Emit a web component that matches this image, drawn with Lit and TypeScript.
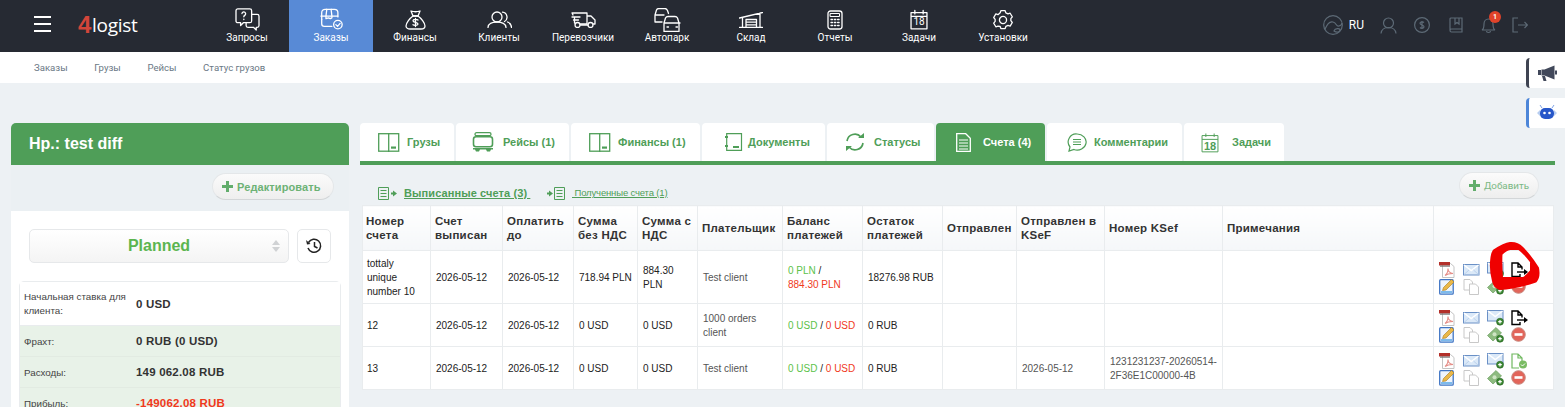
import { LitElement, html, css, svg } from "lit";
import { customElement } from "lit/decorators.js";

const navIcon: Record<string, any> = {
  q: svg`<path d="M3 2h13a2 2 0 0 1 2 2v11a2 2 0 0 1-2 2H9l-3 3v-3H3a2 2 0 0 1-2-2V4a2 2 0 0 1 2-2z"/><path d="M18 8h6a2 2 0 0 1 2 2v10a2 2 0 0 1-2 2h-1v3l-3-3h-6a2 2 0 0 1-2-2v-3"/><path d="M7.500 7a2 2 0 1 1 3 2c-.7.400-1 .9-1 1.600M9.500 13v.6"/>`,
  o: svg`<path d="M3 14V6a4 4 0 0 1 4-4h11a4 4 0 0 1 4 4v5"/><path d="M2 10h20M9 2l-1 8v3l3-1 2 1 2-1 0-2-1-8"/><path d="M3 14v5a3 3 0 0 0 3 3h9"/><circle cx="22" cy="20" r="5"/><path d="M19.600 20l2 2 3-3.500"/>`,
  f: svg`<path d="M6 1c3 1 6 1 9 0l-2 5H8z"/><path d="M8 6h5c3 2 7 7 7 10 0 2-2 3-4 3H5c-2 0-4-1-4-3 0-3 4-8 7-10z"/><path d="M13 10c-1-1-5-1-5 .7 0 2.300 5 1 5 3.300 0 1.600-4 1.600-5 .7M10.500 8.500v8"/>`,
  c: svg`<circle cx="10" cy="6" r="5"/><path d="M1 16.500c0-3.500 4-5.500 9-5.500s9 2 9 5.500"/><path d="M15.500 1.200a5 5 0 0 1 2 9.300M20.500 11c2.500 1 4 3 4 5.500"/>`,
  t: svg`<path d="M1 1h15v11H9.500M1 1l1 2M16 4h4l4 4v4h-1.500M1 5h8M2.500 8h5M3.500 5v6"/><circle cx="6.500" cy="13" r="2.500"/><circle cx="19.500" cy="13" r="2.500"/><path d="M9.500 13H17"/>`,
  a: svg`<path d="M1 14V7l1.500-5C3 1 4 .5 5 .5h6c1.500 0 2 1 2.500 2l1 3M1 7h9M1 14h7"/><path d="M10 23.500V15l1.500-5c.5-1 1-1.500 2.500-1.500h7c1.500 0 2 .5 2.500 1.500l1.500 5v8.500zM10 15h16M13 19h1.500M22 19h1.500"/>`,
  s: svg`<path d="M.5 6l23-5.500M3.500 15.500V6M21 15.500V1M.5 15.500h23M7 7.500h10.500v8H7zM7 10.200h10.500M7 12.800h10.500"/>`,
  r: svg`<rect x="1" y="1" width="14" height="18" rx="2.500"/><path d="M3.500 3.500h9v3h-9z" stroke-width="1"/><path d="M4 9.500h1.500M7.300 9.500h1.500M10.600 9.500h1.500M4 12.500h1.500M7.300 12.500h1.500M10.600 12.500h1.500M4 15.500h1.500M7.300 15.500h1.500M10.600 15.500h1.500"/>`,
  u: svg`<path d="M11 2h6l1 3 3 1.500 3-1 3 5-2 2.500v3l2 2.500-3 5-3-1-3 1.500-1 3h-6l-1-3L7 23.500l-3 1-3-5 2-2.500v-3L1 11.500l3-5 3 1L10 5z"/><circle cx="14" cy="15" r="5"/>`,
};

const navItems = [
  { l: "Запросы", i: "q", vb: "0 1 27 25", w: 25, h: 23 },
  { l: "Заказы", i: "o", vb: "1 1 27 26", w: 23, h: 23, on: true },
  { l: "Финансы", i: "f", vb: "0 0 21 20", w: 21, h: 20 },
  { l: "Клиенты", i: "c", vb: "0 0 25 17", w: 25, h: 17 },
  { l: "Перевозчики", i: "t", vb: "0 0 25 16", w: 25, h: 16 },
  { l: "Автопарк", i: "a", vb: "0 0 27 24", w: 27, h: 24 },
  { l: "Склад", i: "s", vb: "0 0 24 16", w: 24, h: 16 },
  { l: "Отчеты", i: "r", vb: "0 0 16 20", w: 16, h: 20 },
  { l: "Задачи", i: "z", vb: "", w: 18, h: 21 },
  { l: "Установки", i: "u", vb: "0 1 28 28", w: 20, h: 20 },
];

const pdfIcon = svg`<svg width="17" height="16" viewBox="0 0 17 16"><path d="M3.500 1.500h8l3.500 3v11H3.500z" fill="#fff" stroke="#c4c4c4"/><rect x="0" y="0" width="11" height="3.500" fill="#b3302a"/><rect x="1" y="3.500" width="10" height="1.200" fill="#777"/><path d="M6 13.500c2-1.500 3-4 3-7 0 3 2 4.500 5 5-3 0-6 .5-8 2z" fill="none" stroke="#e58e88" stroke-width="1.100"/></svg>`;
const mailIcon = svg`<svg width="17" height="12" viewBox="0 0 17 12"><rect x=".5" y=".5" width="15.500" height="10.500" fill="#dbe9f8" stroke="#6a90c6"/><path d="M1 1l7.250 5.500L15.500 1" fill="none" stroke="#fff" stroke-width="1.500"/><path d="M1 10.500L6 6M15.500 10.500L10.500 6" stroke="#bcd2ec" fill="none"/></svg>`;
const plusBadge = svg`<circle cx="13" cy="11.700" r="3.500" fill="#3f8a35" stroke="#1f5c1b" stroke-width=".6"/><path d="M11.200 11.700h3.600M13 9.900v3.600" stroke="#fff" stroke-width="1.200"/>`;
const mailPlus = svg`<svg width="17" height="16" viewBox="0 0 17 16"><rect x=".5" y=".5" width="15.500" height="10.500" fill="#dbe9f8" stroke="#6a90c6"/><path d="M1 1l7.250 5.500L15.500 1" fill="none" stroke="#fff" stroke-width="1.500"/>${plusBadge}</svg>`;
const editIcon = svg`<svg width="16" height="17" viewBox="0 0 16 17"><rect x=".7" y="1.700" width="13.500" height="14.500" rx="1" fill="#eef4fc" stroke="#3f74c4" stroke-width="1.300"/><rect x="2" y="13" width="11" height="2.300" fill="#7dbaec"/><path d="M3.500 12.500l1-3L12.500 1.500l2.500 2.500-8 8z" fill="#eab848" stroke="#a77a1f" stroke-width=".6"/></svg>`;
const copyIcon = svg`<svg width="17" height="16" viewBox="0 0 17 16"><path d="M1 .5h6l2.500 2.500v8H1z" fill="#fff" stroke="#c8c8c8"/><path d="M6.500 5h6l3 3v7.500h-9z" fill="#fff" stroke="#c8c8c8"/></svg>`;
const moneyIcon = svg`<svg width="17" height="16" viewBox="0 0 17 16"><path d="M.5 8.500L9 .5l5.500 5.500-8.500 8z" fill="#8dbb7f" stroke="#6a9e5e" stroke-width=".7"/><circle cx="7.500" cy="7.300" r="2" fill="#cfe5c4"/>${plusBadge}</svg>`;
const delIcon = svg`<svg width="15" height="15" viewBox="0 0 15 15"><circle cx="7.500" cy="7.500" r="6.800" fill="#e2655a" stroke="#c9897f"/><rect x="3.500" y="6.200" width="8" height="2.600" fill="#fff"/></svg>`;
const exportIcon = svg`<svg width="17" height="16" viewBox="0 0 17 16"><path d="M9 12v2.500H1V1h6l4 4v2.500M7 1v4h4" fill="none" stroke="#000" stroke-width="1.400"/><path d="M6 10h8" stroke="#000" stroke-width="1.400"/><path d="M13 7l4 3-4 3z" fill="#000"/></svg>`;
const okIcon = svg`<svg width="17" height="16" viewBox="0 0 17 16"><path d="M8 15H1V1h6l4 4v4M7 1v4h4" fill="none" stroke="#6fb85f" stroke-width="1.200"/><circle cx="12" cy="11.500" r="4" fill="#79bb62"/><path d="M10 11.500l1.500 1.500 2.500-2.500" stroke="#fff" fill="none"/></svg>`;

const G = "#4f9e58";
const tabIcons: Record<string, any> = {
  split: svg`<svg width="22" height="19" viewBox="0 0 22 19"><rect x=".7" y=".7" width="20" height="17.500" fill="none" stroke="${G}" stroke-width="1.300"/><path d="M10.700 0v19" stroke="${G}" stroke-width="1.300"/><rect x="13" y="13.500" width="5" height="2.200" fill="${G}"/></svg>`,
  bus: svg`<svg width="22" height="20" viewBox="0 0 22 20"><rect x="3" y=".7" width="16" height="3" rx="1.500" fill="none" stroke="${G}" stroke-width="1.300"/><rect x="1.500" y="4.700" width="19" height="10" rx="2.500" fill="none" stroke="${G}" stroke-width="1.600"/><path d="M1 16h20v1.500H1zM3 17.500h5l-1 2H4zM14 17.500h5l-1 2h-3z" fill="${G}"/></svg>`,
  doc: svg`<svg width="18" height="18" viewBox="0 0 18 18"><path d="M1.700.7h14.800v16.600H1.700z" fill="none" stroke="${G}" stroke-width="1.200"/><path d="M0 3h3v2H0zM0 12h3v2H0zM8 13h6v2H8z" fill="${G}"/></svg>`,
  sync: svg`<svg width="20" height="18" viewBox="0 0 20 18"><path d="M2 8a8 8 0 0 1 14-4M18 10a8 8 0 0 1-14 4" fill="none" stroke="${G}" stroke-width="1.700"/><path d="M13 5h6V0zM7 13H1v5z" fill="${G}"/></svg>`,
  inv: svg`<svg width="15" height="19" viewBox="0 0 15 19"><path d="M.7.7h9l4.600 4.600v13H.7z" fill="none" stroke="#fff" stroke-width="1.300"/><path d="M3 7h9M3 10h9M3 13h9M3 16h9" stroke="#fff"/></svg>`,
  chat: svg`<svg width="20" height="19" viewBox="0 0 20 19"><path d="M10 1a9 8 0 1 1-3 15.500L2 18l1-4A8 8 0 0 1 10 1z" fill="none" stroke="${G}" stroke-width="1.200"/><path d="M6 6.500h8M6 9h8M6 11.500h8" stroke="${G}" stroke-width="1.100"/></svg>`,
};

const tabs = [
  { l: "Грузы", i: "split", w: 94, pl: 18, gap: 7 },
  { l: "Рейсы (1)", i: "bus", w: 113, pl: 16, gap: 9 },
  { l: "Финансы (1)", i: "split", w: 129, pl: 18, gap: 7 },
  { l: "Документы", i: "doc", w: 123, pl: 23, gap: 5 },
  { l: "Статусы", i: "sync", w: 107, pl: 18, gap: 9 },
  { l: "Счета (4)", i: "inv", w: 109, pl: 20, gap: 12, on: true },
  { l: "Комментарии", i: "chat", w: 135, pl: 20, gap: 7 },
  { l: "Задачи", i: "cal", w: 100, pl: 17, gap: 13 },
];

const cols = [68, 72, 71, 64, 60, 85, 80, 80, 74, 88, 118, 211, 120];
const heads = ["Номер счета", "Счет выписан", "Оплатить до", "Сумма без НДС", "Сумма с НДС", "Плательщик", "Баланс платежей", "Остаток платежей", "Отправлен", "Отправлен в KSeF", "Номер KSef", "Примечания", ""];

const rows = [
  { n: "tottaly unique number 10", wo: "718.94 PLN", w: "884.30 PLN", p: "Test client", g: "0 PLN", r: "884.30 PLN", brk: true, o: "18276.98 RUB", k: "", kn: "", h: 53, last: exportIcon },
  { n: "12", wo: "0 USD", w: "0 USD", p: "1000 orders client", g: "0 USD", r: "0 USD", o: "0 RUB", k: "", kn: "", h: 43, last: exportIcon },
  { n: "13", wo: "0 USD", w: "0 USD", p: "Test client", g: "0 USD", r: "0 USD", o: "0 RUB", k: "2026-05-12", kn: "1231231237-20260514-2F36E1C00000-4B", h: 43, last: okIcon },
];

@customElement("app-root")
export class AppRoot extends LitElement {
  static styles = css`
    :host { display: block; width: 1565px; height: 407px; overflow: hidden; position: relative; background: #edf1f4; font-family: "Liberation Sans", Arial, sans-serif; }
    * { box-sizing: border-box; }
    .top { height: 52px; background: #262a33; display: flex; align-items: stretch; }
    .burger { width: 78px; padding: 16px 0 0 34px; flex: none; }
    .burger i { display: block; width: 17px; height: 1.500px; background: #fff; margin-bottom: 5.500px; }
    .logo { width: 127px; flex: none; padding-top: 15px; font: 400 19px/20px "Open Sans", sans-serif; color: #fff; display: flex; letter-spacing: -.3px; }
    .logo b { color: #d2453a; font: 700 24px/20px "Liberation Sans", sans-serif; margin-right: 1px; }
    .nav { display: flex; flex: none; }
    .nav a { width: 84px; display: flex; flex-direction: column; align-items: center; color: #fff; font: 400 10px/12px Roboto, sans-serif; padding-top: 7px; }
    .nav a.on { background: #588ad6; }
    .nav .ic { height: 25px; display: flex; align-items: center; justify-content: center; }
    .nav svg { fill: none; stroke: #fff; stroke-width: 1.300; stroke-linejoin: round; stroke-linecap: round; display: block; }
    .nav svg * { vector-effect: non-scaling-stroke; }
    .cal18 { position: relative; display: block; }
    .cal18 span { position: absolute; left: 0; right: 0; text-align: center; }
    .nav .cal18 span { top: 7px; font: 400 10px/12px Roboto, sans-serif; }
    .rt { margin-left: auto; display: flex; align-items: center; padding: 0 37px 2px 0; }
    .rt svg { display: block; fill: none; stroke: #5d6a76; stroke-width: 1.200; }
    .ru { color: #fff; font: 400 12px/16px Roboto, sans-serif; margin: 0 16px 0 6px; }
    .bell { position: relative; margin: 0 16px 0 18px; }
    .bell em { position: absolute; top: -6px; right: -5px; width: 12px; height: 12px; border-radius: 50%; background: #e0432a; color: #fff; font: 700 7px/12px Roboto, sans-serif; text-align: center; }
    .ml17 { margin-left: 17px; }
    .ml19 { margin-left: 19px; }
    .sub { height: 31px; background: #fff; display: flex; gap: 26.600px; padding: 0 0 0 34px; align-items: center; font: 400 9.600px/12px Roboto, sans-serif; color: #6a7885; }
    .float { position: absolute; right: 0; width: 39px; background: #fff; display: flex; align-items: center; justify-content: center; border-radius: 4px 0 0 4px; }
    .f1 { top: 58px; height: 30px; border-left: 3px solid #3f4452; }
    .f2 { top: 98px; height: 30px; border-left: 3px solid #4d86d8; }
    .main { display: flex; align-items: flex-start; gap: 11px; padding: 40px 0 0 11px; }
    .left { width: 338px; flex: none; }
    .lh { height: 42px; background: #4f9e58; border-radius: 5px 5px 0 0; color: #fff; font: 700 16px/41px "Liberation Sans", sans-serif; padding-left: 18px; }
    .bar { height: 46px; background: #ebf0f3; display: flex; justify-content: flex-end; padding: 8px 15px 0 0; }
    .btn { height: 27px; border-radius: 14px; border: 1px solid #e4e7e9; border-bottom-color: #d3d6d8; background: linear-gradient(#fbfbfb, #eeeeee); display: inline-flex; align-items: center; color: #6db275; font-size: 11px; font-weight: 700; white-space: nowrap; }
    .btn.edit { width: 122px; padding-left: 9px; gap: 4px; letter-spacing: .1px; }
    .plus { position: relative; width: 11px; height: 11px; flex: none; display: block; }
    .plus::before, .plus::after { content: ""; position: absolute; background: #62ad6c; }
    .plus::before { left: 0; right: 0; top: 4px; height: 3px; }
    .plus::after { top: 0; bottom: 0; left: 4px; width: 3px; }
    .lbody { background: #fff; padding: 18px 8px 0 8px; height: 250px; }
    .strow { display: flex; gap: 8px; padding: 0 10px; }
    .sel { width: 260px; height: 34px; border: 1px solid #e6e8ea; border-radius: 5px; background: linear-gradient(#fff, #f4f4f4); color: #5cb54f; font: 700 16px/32px "Liberation Sans", sans-serif; text-align: center; position: relative; }
    .arrows { position: absolute; right: 8px; top: 10px; width: 8px; display: flex; flex-direction: column; gap: 2px; }
    .arrows i { display: block; width: 0; height: 0; border-left: 4px solid transparent; border-right: 4px solid transparent; }
    .arrows i:first-child { border-bottom: 5px solid #d0d2d4; }
    .arrows i:last-child { border-top: 5px solid #d0d2d4; }
    .hist { width: 34px; height: 34px; border: 1px solid #e6e8ea; border-radius: 5px; background: #fff; display: flex; align-items: center; justify-content: center; }
    .info { margin-top: 18px; border: 1px solid #e9ecee; border-radius: 5px 5px 0 0; font-size: 9.800px; color: #444; }
    .ir { display: grid; grid-template-columns: 112px 1fr; align-items: center; padding-left: 4px; height: 31px; background: #e8f2e8; border-bottom: 1px solid #e2ebe2; }
    .ir.first { height: 44px; background: #fff; line-height: 14px; border-bottom-color: #e9ecee; }
    .ir b { font-size: 11.500px; color: #333; font-weight: 700; letter-spacing: .2px; }
    .ir b.red { color: #f0391c; }
    .panel { width: 1195px; flex: none; }
    .tabs { display: flex; gap: 2px; height: 42px; border-bottom: 4px solid #4f9e58; }
    .tab { height: 38px; background: #fff; border-radius: 4px 4px 0 0; display: flex; align-items: center; color: #4f9e58; font-size: 11px; font-weight: 700; white-space: nowrap; }
    .tab.on { background: #4f9e58; color: #fff; }
    .tab .cal18 span { top: 8px; font: 700 11px/12px "Liberation Sans", sans-serif; color: #4f9e58; }
    .subtabs { height: 40px; display: flex; align-items: flex-start; padding: 21px 0 0 18px; position: relative; }
    .subtabs a { display: flex; align-items: center; color: #4f9e58; white-space: nowrap; }
    .subtabs a span { text-decoration: underline; }
    .s1 { font: 700 11px/14px "Liberation Sans", sans-serif; width: 168px; gap: 6px; letter-spacing: .1px; }
    .s2 { font: 400 9.500px/14px "Liberation Sans", sans-serif; gap: 6px; }
    .s2 span { letter-spacing: -.15px; }
    .btn.add { position: absolute; right: 16px; top: 7px; width: 80px; padding-left: 9px; gap: 4px; font: 400 9.800px "Roboto", sans-serif; color: #7ab883; }
    .tw { margin: 0 2px; }
    table { border-collapse: collapse; table-layout: fixed; width: 1191px; background: #fff; }
    th, td { border: 1px solid #e9ecee; text-align: left; vertical-align: middle; overflow: hidden; }
    th { height: 45px; padding: 0 3px 0 4px; font-size: 11.500px; letter-spacing: .25px; line-height: 14px; color: #333; font-weight: 700; background: linear-gradient(#fff, #f5f7f9); }
    td { padding: 2px 3px 0 5px; font-size: 10px; line-height: 14px; color: #222; }
    th:first-child { padding-left: 3px; }
    td:first-child { padding-left: 4px; padding-right: 8px; }
    td.gr { color: #555; }
    .g { color: #5cc24a; }
    .r { color: #f0391c; }
    .acts { display: grid; grid-template-columns: repeat(4, 24px); grid-auto-rows: 17px; align-items: center; }
    .acts svg { display: block; }
    .scribble { position: absolute; left: 1480px; top: 235px; pointer-events: none; }
  `;

  cal(w: number, h: number, color: string, sw: number) {
    return html`<span class="cal18" style="width:${w}px;height:${h}px"><svg width=${w} height=${h} viewBox="0 0 26 30" fill="none" stroke=${color} stroke-width=${sw}><path d="M1.500 5h23v23.500h-23zM1.500 10.500h23M7 2v5M19 2v5"/></svg><span>18</span></span>`;
  }

  render() {
    return html`
      <div class="top">
        <div class="burger"><i></i><i></i><i></i></div>
        <div class="logo"><b>4</b>logist</div>
        <div class="nav">
          ${navItems.map(n => html`<a class=${n.on ? "on" : ""}>
            <span class="ic">${n.i === "z" ? this.cal(n.w, n.h, "#fff", 1.5) : html`<svg width=${n.w} height=${n.h} viewBox=${n.vb}>${navIcon[n.i]}</svg>`}</span>
            ${n.l}</a>`)}
        </div>
        <div class="rt">
          <svg width="20" height="20" viewBox="0 0 20 20"><circle cx="10" cy="10" r="9.300"/><path d="M2 14c2-4 4-8 8-7s3 5 6 4 3-3 3-3M11 16c1-3 6-3 6-1s-3 3-6 1z"/></svg>
          <span class="ru">RU</span>
          <svg width="17" height="17" viewBox="0 0 17 17"><circle cx="8.500" cy="6" r="5"/><path d="M1 16.500c.5-4 3.500-6 7.500-6s7 2 7.500 6"/></svg>
          <svg class="ml17" width="16" height="16" viewBox="0 0 16 16"><circle cx="8" cy="8" r="7.400"/><path d="M10 5.500C9 4.500 6 4.500 6 6.300c0 2 4 1.300 4 3.400 0 1.800-3 1.800-4 .8M8 4v8"/></svg>
          <svg class="ml19" width="14" height="16" viewBox="0 0 14 16"><path d="M1 13V2a1 1 0 0 1 1-1h11v11H2.500A1.500 1.500 0 0 0 1 13.500 1.500 1.500 0 0 0 2.500 15H13v-3M6 1v6l2-1.500L10 7V1"/></svg>
          <span class="bell"><svg width="15" height="17" viewBox="0 0 15 17"><path d="M1 13c2-1 2-3 2-6 0-3 2-5 4.500-5S12 4 12 7c0 3 0 5 2 6zM5.500 14c0 2 4 2 4 0"/></svg><em>1</em></span>
          <svg width="16" height="16" viewBox="0 0 16 16"><path d="M6 1H1v14h5M6 8h9.500M12.500 5l3 3-3 3"/></svg>
        </div>
      </div>
      <div class="sub"><span>Заказы</span><span>Грузы</span><span>Рейсы</span><span>Статус грузов</span></div>
      <div class="float f1"><svg width="19" height="16" viewBox="0 0 19 16"><path d="M0 5h3v5H0zM3.500 4.500h3l10-4v14l-10-4h-3zM4 11h3l1.500 5h-3z" fill="#41485a"/><path d="M18 5.500v4" stroke="#41485a" stroke-width="2"/></svg></div>
      <div class="float f2"><svg width="22" height="16" viewBox="0 0 22 16"><path d="M1 8l3-3v6zM21 8l-3-3v6z" fill="#b7cdf0"/><rect x="4" y="3" width="14" height="11" rx="5" fill="#2757c9"/><path d="M6 3L4 0M16 3l2-3" stroke="#7fa2e6"/><circle cx="8.500" cy="8" r="1.300" fill="#fff"/><circle cx="13.500" cy="8" r="1.300" fill="#fff"/></svg></div>
      <div class="main">
        <div class="left">
          <div class="lh">Нр.: test diff</div>
          <div class="bar"><span class="btn edit"><i class="plus"></i>Редактировать</span></div>
          <div class="lbody">
            <div class="strow">
              <div class="sel">Planned<span class="arrows"><i></i><i></i></span></div>
              <div class="hist"><svg width="16" height="16" viewBox="0 0 16 16" fill="none" stroke="#222" stroke-width="1.500"><path d="M2.500 4.500A6.500 6.500 0 1 1 2 10"/><path d="M0 2l4.500 4L1 6.500z" fill="#222" stroke="none"/><path d="M8.500 4v4.500l3 1.500"/></svg></div>
            </div>
            <div class="info">
              <div class="ir first"><span>Начальная ставка для клиента:</span><b>0 USD</b></div>
              <div class="ir"><span>Фрахт:</span><b>0 RUB (0 USD)</b></div>
              <div class="ir"><span>Расходы:</span><b>149 062.08 RUB</b></div>
              <div class="ir"><span>Прибыль:</span><b class="red">-149062.08 RUB</b></div>
            </div>
          </div>
        </div>
        <div class="panel">
          <div class="tabs">
            ${tabs.map(t => html`<div class="tab ${t.on ? "on" : ""}" style="width:${t.w}px;padding-left:${t.pl}px;gap:${t.gap}px">${t.i === "cal" ? this.cal(18, 21, G, 1.4) : tabIcons[t.i]}${t.l}</div>`)}
          </div>
          <div class="subtabs">
            <a class="s1"><svg width="20" height="13" viewBox="0 0 20 13" fill="none" stroke="${G}"><path d="M.5.500h10v12H.5zM2.500 3.500h6M2.500 6.500h6M2.500 9.500h6"/><path d="M13 6.500h3" stroke-width="2"/><path d="M15 3.500l4 3-4 3z" fill="${G}" stroke="none"/></svg><span>Выписанные счета (3)&nbsp;</span></a>
            <a class="s2"><svg width="20" height="13" viewBox="0 0 20 13" fill="none" stroke="${G}"><path d="M8.500.500h10v12h-10zM10.500 3.500h6M10.500 6.500h6M10.500 9.500h6"/><path d="M1 6.500h3" stroke-width="2"/><path d="M3 3.500l4 3-4 3z" fill="${G}" stroke="none"/></svg><span>&nbsp;Полученные счета (1)</span></a>
            <span class="btn add"><i class="plus"></i>Добавить</span>
          </div>
          <div class="tw">
            <table>
              <colgroup>${cols.map(c => html`<col style="width:${c}px">`)}</colgroup>
              <tr>${heads.map(h => html`<th>${h}</th>`)}</tr>
              ${rows.map(r => html`<tr style="height:${r.h}px">
                <td>${r.n}</td><td>2026-05-12</td><td>2026-05-12</td><td>${r.wo}</td><td>${r.w}</td>
                <td class="gr">${r.p}</td>
                <td><span class="g">${r.g}</span> / ${r.brk ? html`<br>` : ""}<span class="r">${r.r}</span></td>
                <td>${r.o}</td><td></td><td class="gr">${r.k}</td><td class="gr">${r.kn}</td><td></td>
                <td><div class="acts">${pdfIcon}${mailIcon}${mailPlus}${r.last}${editIcon}${copyIcon}${moneyIcon}${delIcon}</div></td>
              </tr>`)}
            </table>
          </div>
        </div>
      </div>
      <svg class="scribble" width="70" height="65" viewBox="0 0 70 65"><path fill-rule="evenodd" fill="#f00000" stroke="#f00000" stroke-width="3" stroke-linejoin="round" d="M14 16C20 12 25 9 30 8.500C35 8 39 10 42 13C48 19 53 26 57.500 33C58.500 38 58 43 55.500 46C44 50 31 53 20 53.500C16 52 14 49 13.500 46C12 40 11 33 11.500 27C12 22 12 19 14 16ZM21 19C24 16 27 14 30 13.500L39 13.500C44 17 48 22 51.500 26.500L51.500 36C49 39 46 42 43.500 43.500L21.500 43.500C21 35 20.500 27 21 19Z"/></svg>
    `;
  }
}
